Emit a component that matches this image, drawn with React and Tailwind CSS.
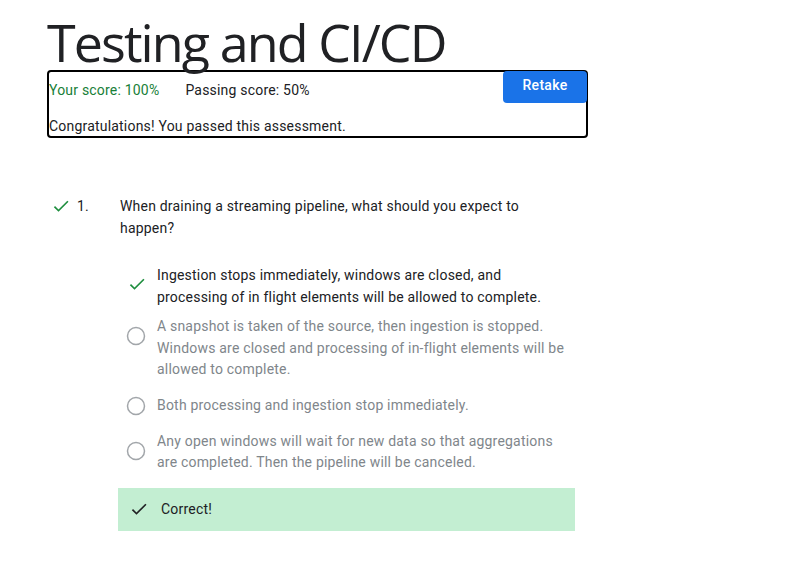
import React from 'react'

const CheckIcon = ({ className }) => (
  <svg viewBox="0 0 24 24" className={className} fill="currentColor">
    <path d="M9 16.17L4.83 12l-1.42 1.41L9 19 21 7l-1.41-1.41z" />
  </svg>
)

const RadioIcon = () => (
  <svg viewBox="0 0 20 20" className="w-[20px] h-[20px] shrink-0">
    <circle cx="10" cy="10" r="8.5" fill="none" stroke="#a2a6aa" strokeWidth="1.5" />
  </svg>
)

const options = [
  {
    text: 'A snapshot is taken of the source, then ingestion is stopped. Windows are closed and processing of in-flight elements will be allowed to complete.',
    mt: 'mt-[8px]',
  },
  { text: 'Both processing and ingestion stop immediately.', mt: 'mt-[5px]' },
  {
    text: 'Any open windows will wait for new data so that aggregations are completed. Then the pipeline will be canceled.',
    mt: 'mt-[5px]',
  },
]

export default function App() {
  return (
    <div className="min-h-[587px] bg-white pl-[47px] pt-[15px] font-['Roboto',sans-serif] text-[14px] tracking-[0.2px] text-[#202124]">
      {/* Title */}
      <h1 className="font-['Open_Sans','Roboto',sans-serif] text-[52px] leading-[53px] font-normal tracking-[-1.9px] text-[#202124] mb-[2px]">
        Testing and CI/CD
      </h1>

      {/* Score box */}
      <div className="w-[541px] border-2 border-black rounded-[4px]">
        <div className="flex items-start justify-between">
          <div className="pt-[8px] flex gap-[26px] leading-5">
            <span className="text-[#188038]">Your score: 100%</span>
            <span className="text-[#202124]">Passing score: 50%</span>
          </div>
          <button className="shrink-0 -mt-px -mr-px w-[84px] h-[32px] rounded-[4px] bg-[#1a73e8] text-white font-medium text-[14px] tracking-[0.3px] pb-[4px]">
            Retake
          </button>
        </div>
        <p className="mt-[13px] leading-5">Congratulations! You passed this assessment.</p>
      </div>

      {/* Question */}
      <div className="mt-[57px] flex items-start">
        <div className="shrink-0 ml-[4px] w-[20px] h-[22px] flex items-center">
          <CheckIcon className="w-[20px] h-[20px] text-[#1e8e3e]" />
        </div>
        <span className="shrink-0 ml-[6px] w-[43px] leading-[22px]">1.</span>
        <p className="w-[455px] leading-[22px]">
          When draining a streaming pipeline, what should you expect to happen?
        </p>
      </div>

      {/* Options */}
      <div className="ml-[71px] w-[457px] mt-[25px]">
        <div className="flex items-start">
          <div className="shrink-0 pl-[9px] w-[39px] h-[40px] flex items-center">
            <CheckIcon className="w-[20px] h-[20px] text-[#1e8e3e]" />
          </div>
          <p className="leading-[22px] text-[#202124]">
            Ingestion stops immediately, windows are closed, and processing of in flight elements will be allowed to complete.
          </p>
        </div>
        {options.map((o, i) => (
          <div key={i} className={`${o.mt} flex items-start min-h-[40px]`}>
            <div className="shrink-0 pl-[8px] w-[39px] h-[40px] flex items-center">
              <RadioIcon />
            </div>
            <p className="self-center leading-[21.5px] text-[#80868b] pr-[4px]">{o.text}</p>
          </div>
        ))}

        {/* Feedback */}
        <div className="mt-[14px] h-[43px] bg-[#c3eed2] flex items-center pl-[11px]">
          <CheckIcon className="w-[20px] h-[20px] text-[#202124]" />
          <span className="ml-[12px]">Correct!</span>
        </div>
      </div>
    </div>
  )
}
